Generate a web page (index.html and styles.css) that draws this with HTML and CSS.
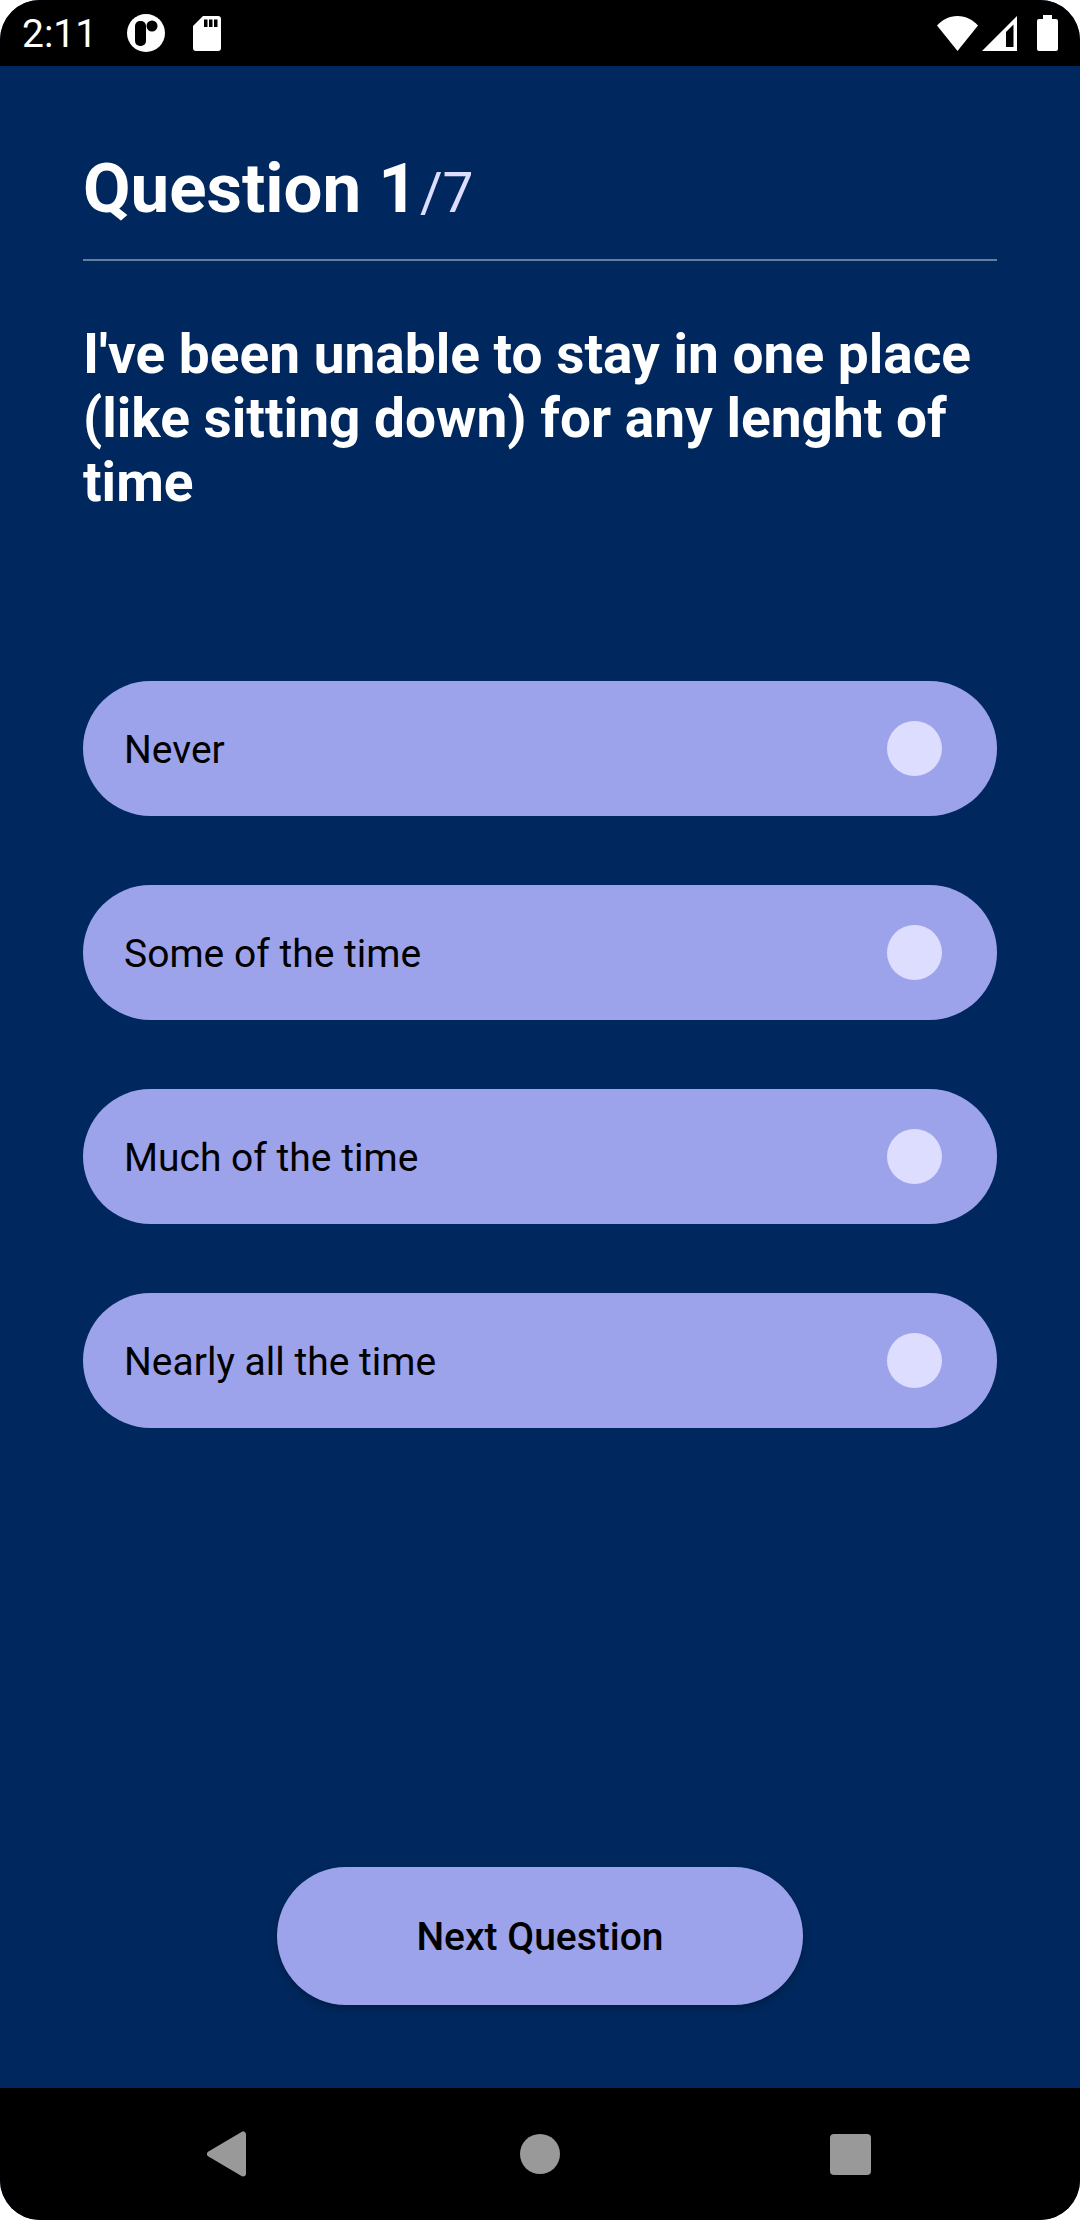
FILE: index.html
```
<!DOCTYPE html>
<html lang="en">
<head>
<meta charset="utf-8">
<meta name="viewport" content="width=device-width, initial-scale=1">
<title>Question 1</title>
<link rel="stylesheet" href="styles.css">
</head>
<body>
<div class="screen">
  <header class="status-bar">
    <div class="status-left">
      <span class="clock">2:11</span>
      <svg class="app-icon" viewBox="0 0 38 38" width="38" height="38" aria-hidden="true"><circle cx="19" cy="19" r="19" fill="#fff"/><rect x="8" y="7" width="11" height="25" rx="5" fill="#000"/><circle cx="25" cy="12" r="5.5" fill="#000"/></svg>
      <svg viewBox="0 0 28 35" width="28" height="35" aria-hidden="true"><path d="M10 0H25a3 3 0 0 1 3 3V32a3 3 0 0 1-3 3H3a3 3 0 0 1-3-3V10Z" fill="#fff"/><path d="M11 3.500h3.500v7.500h-3.500zM16 3.500h3.500v7.500h-3.500zM21 3.500h3.500v7.500h-3.500z" fill="#000"/></svg>
    </div>
    <div class="status-right">
      <svg viewBox="0 0 41 35" width="41" height="35" aria-hidden="true"><path d="M20.500 35L0 9.500C5 4 12 0 20.500 0S36 4 41 9.500Z" fill="#fff"/></svg>
      <svg viewBox="0 0 35 35" width="35" height="35" aria-hidden="true"><path d="M0 35L35 0V35Z" fill="#fff"/><path d="M24 16L31.500 8.500V31H24Z" fill="#000"/></svg>
      <svg class="battery" viewBox="0 0 21 36" width="21" height="36" aria-hidden="true"><path d="M6 0H15V4H19a2 2 0 0 1 2 2V34a2 2 0 0 1-2 2H2a2 2 0 0 1-2-2V6a2 2 0 0 1 2-2H6Z" fill="#fff"/></svg>
    </div>
  </header>

  <main class="quiz">
    <h1 class="progress">Question 1<span class="total">/7</span></h1>
    <form class="question-form">
      <fieldset class="question">
        <legend class="prompt">I've been unable to stay in one place (like sitting down) for any lenght of time</legend>
        <div class="options">
          <label class="option"><span class="option-text">Never</span><input class="radio" type="radio" name="answer" value="0"></label>
          <label class="option"><span class="option-text">Some of the time</span><input class="radio" type="radio" name="answer" value="1"></label>
          <label class="option"><span class="option-text">Much of the time</span><input class="radio" type="radio" name="answer" value="2"></label>
          <label class="option"><span class="option-text">Nearly all the time</span><input class="radio" type="radio" name="answer" value="3"></label>
        </div>
      </fieldset>
      <button class="next" type="button">Next Question</button>
    </form>
  </main>

  <nav class="nav-bar" aria-label="System">
    <button class="nav-button" type="button" aria-label="Back"><svg viewBox="0 0 46 46" width="46" height="46"><path d="M3 23L36 3.500V42.500Z" fill="#999" stroke="#999" stroke-width="6" stroke-linejoin="round"/></svg></button>
    <button class="nav-button" type="button" aria-label="Home"><svg viewBox="0 0 46 46" width="46" height="46"><circle cx="23" cy="23" r="20" fill="#999"/></svg></button>
    <button class="nav-button" type="button" aria-label="Recent apps"><svg viewBox="0 0 46 46" width="46" height="46"><rect x="3" y="3" width="41" height="41" rx="4" fill="#999"/></svg></button>
  </nav>
</div>
</body>
</html>
```
FILE: styles.css
```
* {
  box-sizing: border-box;
}

body {
  margin: 0;
  background: #fff;
  font-family: Roboto, "Liberation Sans", sans-serif;
}

svg {
  display: block;
}

.screen {
  display: flex;
  flex-direction: column;
  min-height: 100vh;
  overflow: hidden;
  border-radius: 40px;
  background: #00285e;
}

.status-bar {
  display: flex;
  align-items: center;
  justify-content: space-between;
  height: 66px;
  padding: 0 22px;
  background: #000;
  color: #fff;
}

.status-left,
.status-right {
  display: flex;
  align-items: center;
}

.status-left {
  gap: 28px;
}

.status-right {
  gap: 4px;
}

.clock {
  padding-top: 2px;
  font-size: 39px;
  line-height: 48px;
}

.app-icon {
  margin-left: 2px;
}

.battery {
  margin-left: 16px;
}

.quiz {
  display: flex;
  flex: 1;
  flex-direction: column;
  padding: 83px;
}

.progress {
  margin: 0;
  padding-bottom: 30px;
  border-bottom: 2px solid #667e9e;
  color: #fff;
  font-size: 69px;
  font-weight: 700;
  line-height: 80px;
}

.total {
  margin-left: 2px;
  color: #dcddff;
  font-size: 55px;
  font-weight: 400;
  line-height: 64px;
}

.question-form {
  display: flex;
  flex: 1;
  flex-direction: column;
  align-items: center;
  justify-content: space-between;
  padding-top: 61px;
}

.question {
  width: 100%;
  margin: 0;
  padding: 0;
  border: 0;
}

.prompt {
  padding: 0;
  color: #fff;
  font-size: 55px;
  font-weight: 700;
  line-height: 64px;
}

.options {
  display: flex;
  flex-direction: column;
  gap: 69px;
  padding-top: 167px;
}

.option {
  display: flex;
  align-items: center;
  justify-content: space-between;
  height: 135px;
  padding: 0 55px 0 41px;
  border-radius: 68px;
  background: #9ca3eb;
  color: #000;
  font-size: 39px;
}

.option-text {
  padding-top: 3px;
}

.radio {
  appearance: none;
  width: 55px;
  height: 55px;
  margin: 0;
  border-radius: 50%;
  background: #dcddff;
}

.radio:checked {
  background: #00285e;
}

.next {
  height: 138px;
  padding: 2px 139px 0;
  border: 0;
  border-radius: 69px;
  background: #9ca3eb;
  box-shadow: 0 4px 8px rgba(0, 0, 0, 0.25);
  color: #000;
  font-family: inherit;
  font-size: 39px;
  font-weight: 500;
}

.nav-bar {
  display: flex;
  align-items: center;
  justify-content: center;
  gap: 264px;
  height: 132px;
  background: #000;
}

.nav-button {
  padding: 0;
  border: 0;
  background: none;
}
```
